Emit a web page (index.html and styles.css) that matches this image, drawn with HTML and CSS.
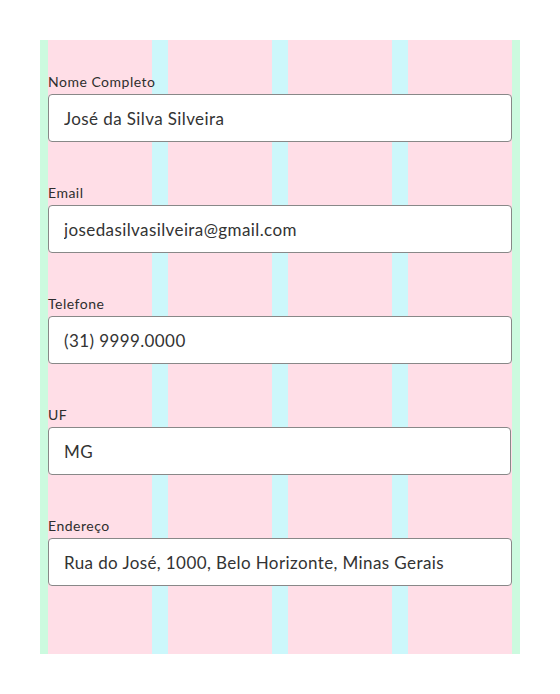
FILE: index.html
```html
<!DOCTYPE html>
<html lang="pt-BR">
<head>
<meta charset="utf-8">
<title>Formulário</title>
<link rel="stylesheet" href="styles.css">
</head>
<body>
<div class="container">
  <form class="grid">
    <div class="field">
      <label class="label" for="nome">Nome Completo</label>
      <input class="input" id="nome" type="text" value="José da Silva Silveira">
    </div>
    <div class="field">
      <label class="label" for="email">Email</label>
      <input class="input" id="email" type="text" value="josedasilvasilveira@gmail.com">
    </div>
    <div class="field">
      <label class="label" for="tel">Telefone</label>
      <input class="input" id="tel" type="text" value="(31) 9999.0000">
    </div>
    <div class="field">
      <label class="label" for="uf">UF</label>
      <input class="input input-uf" id="uf" type="text" value="MG">
    </div>
    <div class="field">
      <label class="label" for="end">Endereço</label>
      <input class="input" id="end" type="text" value="Rua do José, 1000, Belo Horizonte, Minas Gerais">
    </div>
  </form>
</div>
</body>
</html>
```
FILE: styles.css
```css
html, body {
  margin: 0;
  padding: 0;
  background: #ffffff;
}
body {
  padding: 40px;
  font-family: Lato, "Open Sans", sans-serif;
  color: #333333;
}
.container {
  background: #ccfadf;
  padding: 0 8px;
  height: 614px;
  box-sizing: border-box;
}
.grid {
  height: 100%;
  box-sizing: border-box;
  margin: 0;
  padding: 34px 0 0;
  display: flex;
  flex-direction: column;
  gap: 43px;
  background: repeating-linear-gradient(to right, #ffdee7 0 104px, #ccf7fb 104px 120px);
}
.field {
  display: flex;
  flex-direction: column;
  gap: 4px;
}
.label {
  font-size: 14px;
  line-height: 16px;
  letter-spacing: 0.5px;
  color: #2e2e2e;
}
.input {
  box-sizing: border-box;
  width: 100%;
  height: 48px;
  margin: 0;
  padding: 0 15px;
  border: 1px solid #888888;
  border-radius: 4px;
  background: #ffffff;
  font-family: inherit;
  font-size: 17px;
  letter-spacing: 0.4px;
  color: #333333;
  outline: none;
}
.input-uf {
  width: calc(100% - 1px);
}
```
